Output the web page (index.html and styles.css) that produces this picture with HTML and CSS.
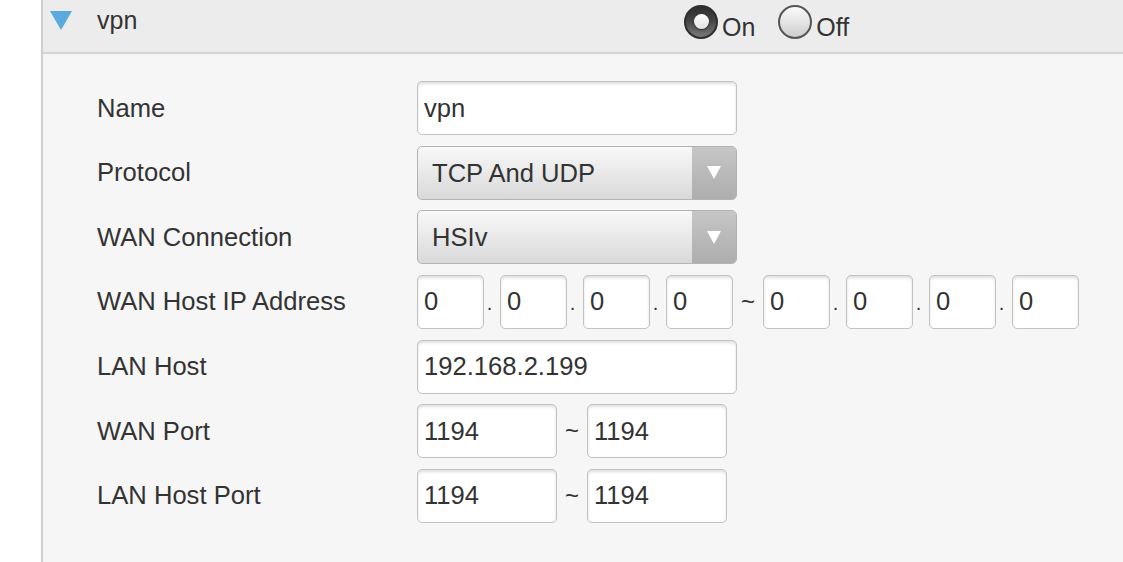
FILE: index.html
```html
<!DOCTYPE html>
<html lang="en">

<head>
  <meta charset="UTF-8">
  <meta name="viewport" content="width=device-width, initial-scale=1.0">
  <title>VPN</title>
  <link rel="stylesheet" href="styles.css">
</head>

<body>
  <div class="panel">

    <!-- header -->
    <div class="panel-head">
      <svg class="toggle" width="22" height="19" viewBox="0 0 22 19">
        <polygon points="0,0 22,0 11,19" fill="#5aaade" />
      </svg>
      <span class="panel-title">vpn</span>
      <div class="switch">
        <label class="opt">
          <span class="radio checked"></span>
          <span class="opt-text">On</span>
        </label>
        <label class="opt">
          <span class="radio"></span>
          <span class="opt-text">Off</span>
        </label>
      </div>
    </div>

    <!-- form -->
    <div class="panel-body">
      <div class="form-row">
        <div class="form-label">Name</div>
        <input class="text-box wide" type="text" value="vpn">
      </div>

      <div class="form-row">
        <div class="form-label">Protocol</div>
        <div class="select-box">
          <span class="select-value">TCP And UDP</span>
          <span class="select-arrow">
            <svg width="14" height="13" viewBox="0 0 14 13"><polygon points="0,0 14,0 7,13" fill="#fff" /></svg>
          </span>
        </div>
      </div>

      <div class="form-row">
        <div class="form-label">WAN Connection</div>
        <div class="select-box">
          <span class="select-value">HSIv</span>
          <span class="select-arrow">
            <svg width="14" height="13" viewBox="0 0 14 13"><polygon points="0,0 14,0 7,13" fill="#fff" /></svg>
          </span>
        </div>
      </div>

      <div class="form-row">
        <div class="form-label">WAN Host IP Address</div>
        <input class="text-box ip" type="text" value="0">
        <span class="sep dot">.</span>
        <input class="text-box ip" type="text" value="0">
        <span class="sep dot">.</span>
        <input class="text-box ip" type="text" value="0">
        <span class="sep dot">.</span>
        <input class="text-box ip" type="text" value="0">
        <span class="sep tilde">~</span>
        <input class="text-box ip" type="text" value="0">
        <span class="sep dot">.</span>
        <input class="text-box ip" type="text" value="0">
        <span class="sep dot">.</span>
        <input class="text-box ip" type="text" value="0">
        <span class="sep dot">.</span>
        <input class="text-box ip" type="text" value="0">
      </div>

      <div class="form-row">
        <div class="form-label">LAN Host</div>
        <input class="text-box wide" type="text" value="192.168.2.199">
      </div>

      <div class="form-row">
        <div class="form-label">WAN Port</div>
        <input class="text-box port" type="text" value="1194">
        <span class="sep tilde">~</span>
        <input class="text-box port" type="text" value="1194">
      </div>

      <div class="form-row">
        <div class="form-label">LAN Host Port</div>
        <input class="text-box port" type="text" value="1194">
        <span class="sep tilde">~</span>
        <input class="text-box port" type="text" value="1194">
      </div>
    </div>

  </div>
</body>

</html>
```

FILE: styles.css
```css
* {
  box-sizing: border-box;
  font-family: 'Liberation Sans', Arial, sans-serif;
  margin: 0;
  padding: 0;
}

body {
  background: #fff;
  color: #333;
  font-size: 25.6px;
}

.panel {
  margin-left: 41px;
  min-height: 100vh;
  background: #f6f6f6;
  border-left: 2px solid #cfcfcf;
}

/* header ----------------------------------- */
.panel-head {
  display: flex;
  align-items: flex-start;
  height: 54px;
  padding-left: 7px;
  background: #ececec;
  border-bottom: 2px solid #d4d4d4;
}

.toggle {
  margin-top: 11px;
  margin-right: 25px;
  flex: none;
}

.panel-title {
  width: 587px;
  line-height: 40px;
  font-size: 25px;
  color: #333;
}

.switch {
  display: flex;
  margin-top: 5px;
}

.opt {
  display: flex;
  align-items: flex-start;
  margin-right: 23px;
}

.opt-text {
  line-height: 34px;
  margin-top: 5px;
  margin-left: 4px;
  font-size: 25px;
  color: #333;
}

.radio {
  display: flex;
  align-items: center;
  justify-content: center;
  width: 34px;
  height: 34px;
  border-radius: 50%;
  border: 2px solid #555;
  background: linear-gradient(#fbfbfb, #cdcdcd);
}

.radio.checked {
  border-color: #2e2e2e;
  background: linear-gradient(#2f2f2f, #444 45%, #7a7a7a);
}

.radio.checked::after {
  content: '';
  width: 15px;
  height: 15px;
  margin-top: -2px;
  border-radius: 50%;
  background: linear-gradient(#fff, #e2e2e2);
  box-shadow: 0 1px 2px rgba(0, 0, 0, .6);
}

/* form ------------------------------------- */
.panel-body {
  display: flex;
  flex-direction: column;
  gap: 10.67px;
  padding: 27px 0 40px 54px;
}

.form-row {
  display: flex;
  align-items: center;
  height: 54px;
}

.form-label {
  width: 320px;
  flex: none;
  color: #333;
}

.text-box {
  height: 54px;
  padding: 0 6px;
  font-size: 25.6px;
  color: #333;
  background: #fff;
  border: 1px solid #c2c2c2;
  border-radius: 5px;
  box-shadow: inset 0 2px 3px rgba(0, 0, 0, .13);
  outline: none;
}

.wide {
  width: 320px;
}

.ip {
  width: 67px;
}

.port {
  width: 140px;
}

.sep {
  flex: none;
  text-align: center;
  color: #333;
}

.dot {
  width: 16px;
  font-size: 20px;
  padding-top: 4px;
  padding-right: 5px;
}

.tilde {
  width: 30px;
  font-size: 24px;
}

.select-box {
  display: flex;
  width: 320px;
  height: 54px;
  border: 1px solid #b3b3b3;
  border-radius: 5px;
  overflow: hidden;
  background: linear-gradient(#f8f8f8, #d9d9d9);
}

.select-value {
  flex: 1;
  padding-left: 14px;
  line-height: 52px;
  color: #333;
}

.select-arrow {
  display: flex;
  align-items: center;
  justify-content: center;
  width: 44px;
  background: linear-gradient(#c6c6c6, #adadad);
}
```
